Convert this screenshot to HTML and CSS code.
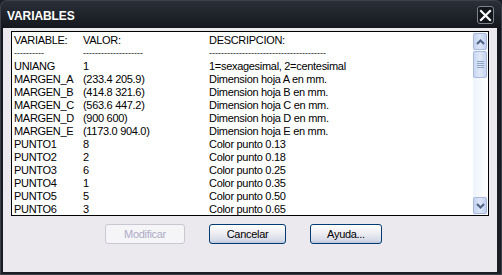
FILE: index.html
```html
<!DOCTYPE html>
<html lang="es">
<head>
  <meta charset="UTF-8" />
  <title>Variables</title>
  <link rel="stylesheet" href="styles.css">
</head>
<body>
  <div class="window">
    <div class="titlebar">
      <span class="title">VARIABLES</span>
      <button class="close" type="button">
        <svg width="13" height="13" viewBox="0 0 13 13"><path d="M2 2 L11 11 M11 2 L2 11" stroke="#fff" stroke-width="2.2" stroke-linecap="square"/></svg>
      </button>
    </div>

    <div class="client">
      <div class="listbox">
        <div class="rows">
          <div class="row"><span>VARIABLE:</span><span>VALOR:</span><span>DESCRIPCION:</span></div>
          <div class="row dashes"><span>----------</span><span>--------------------</span><span>---------------------------------------</span></div>
          <div class="row"><span>UNIANG</span><span>1</span><span>1=sexagesimal, 2=centesimal</span></div>
          <div class="row"><span>MARGEN_A</span><span>(233.4 205.9)</span><span>Dimension hoja A en mm.</span></div>
          <div class="row"><span>MARGEN_B</span><span>(414.8 321.6)</span><span>Dimension hoja B en mm.</span></div>
          <div class="row"><span>MARGEN_C</span><span>(563.6 447.2)</span><span>Dimension hoja C en mm.</span></div>
          <div class="row"><span>MARGEN_D</span><span>(900 600)</span><span>Dimension hoja D en mm.</span></div>
          <div class="row"><span>MARGEN_E</span><span>(1173.0 904.0)</span><span>Dimension hoja E en mm.</span></div>
          <div class="row"><span>PUNTO1</span><span>8</span><span>Color punto 0.13</span></div>
          <div class="row"><span>PUNTO2</span><span>2</span><span>Color punto 0.18</span></div>
          <div class="row"><span>PUNTO3</span><span>6</span><span>Color punto 0.25</span></div>
          <div class="row"><span>PUNTO4</span><span>1</span><span>Color punto 0.35</span></div>
          <div class="row"><span>PUNTO5</span><span>5</span><span>Color punto 0.50</span></div>
          <div class="row"><span>PUNTO6</span><span>3</span><span>Color punto 0.65</span></div>
        </div>

        <div class="scrollbar">
          <div class="sb-btn">
            <svg width="9" height="6" viewBox="0 0 9 6"><path d="M1 5 L4.5 1.5 L8 5" fill="none" stroke="#4d6185" stroke-width="2"/></svg>
          </div>
          <div class="sb-thumb">
            <svg width="7" height="7" viewBox="0 0 7 7"><path d="M0 0.5 H7 M0 2.5 H7 M0 4.5 H7 M0 6.5 H7" stroke="#8ea4c9" stroke-width="1"/></svg>
          </div>
          <div class="sb-track"></div>
          <div class="sb-btn">
            <svg width="9" height="6" viewBox="0 0 9 6"><path d="M1 1 L4.5 4.5 L8 1" fill="none" stroke="#4d6185" stroke-width="2"/></svg>
          </div>
        </div>
      </div>

      <div class="buttons">
        <button class="btn btn-modificar" type="button" disabled>Modificar</button>
        <button class="btn btn-cancelar" type="button">Cancelar</button>
        <button class="btn btn-ayuda" type="button">Ayuda...</button>
      </div>
    </div>
  </div>
</body>
</html>
```

FILE: styles.css
```css
body {
  margin: 0;
  background: #1b1e24;
  font-family: "Liberation Sans", Arial, sans-serif;
}

.window {
  width: 502px;
  height: 275px;
  display: flex;
  flex-direction: column;
  background: linear-gradient(#2c3039, #14171d 28px, #1b1e24);
  border-radius: 7px 7px 0 0;
  box-shadow: inset 0 0 0 1px #3b4049;
}

.titlebar {
  height: 28px;
  display: flex;
  align-items: center;
  justify-content: space-between;
  padding: 0 8px 0 7px;
}

.title {
  color: #fff;
  font-weight: bold;
  font-size: 12px;
  letter-spacing: -0.1px;
  margin-top: 3px;
}

.close {
  width: 17px;
  height: 18px;
  padding: 0;
  margin-top: 2px;
  display: flex;
  align-items: center;
  justify-content: center;
  background: #12151a;
  border: 1px solid #7d848e;
  border-radius: 3px;
}

.client {
  flex: 1;
  margin: 0 5px 3px 3px;
  padding: 3px 8px 0 8px;
  background: #ebe9ed;
}

.listbox {
  width: 476px;
  height: 183px;
  border: 1px solid #000;
  background: #fff;
  display: flex;
}

.rows {
  flex: 1;
  padding: 2px 0 0 2px;
  overflow: hidden;
}

.row {
  display: grid;
  grid-template-columns: 69px 126px 1fr;
  height: 13px;
  line-height: 13px;
  font-size: 11px;
  letter-spacing: -0.3px;
  color: #000;
  white-space: nowrap;
}

.row.dashes {
  font-size: 9px;
  letter-spacing: 0;
  line-height: 12px;
  color: #222;
}

.scrollbar {
  width: 15px;
  display: flex;
  flex-direction: column;
  background: linear-gradient(90deg, #eef3fc, #fdfeff);
  padding: 1px 0 1px 0;
}

.sb-btn {
  height: 15px;
  margin: 0 1px 0 0;
  display: flex;
  align-items: center;
  justify-content: center;
  background: linear-gradient(90deg, #c5d3ef, #dde6f7 50%, #c0cfee);
  border: 1px solid #a8b9dc;
  border-radius: 2px;
}

.sb-thumb {
  height: 25px;
  margin: 1px 1px 0 0;
  display: flex;
  align-items: center;
  justify-content: center;
  background: linear-gradient(90deg, #c9d7f1, #e0e8f8 50%, #c6d4f0);
  border: 1px solid #a8b9dc;
  border-radius: 2px;
}

.sb-track {
  flex: 1;
}

.buttons {
  display: flex;
  gap: 24px;
  padding: 8px 0 0 94px;
}

.btn {
  height: 20px;
  padding: 0;
  font-family: "Liberation Sans", Arial, sans-serif;
  font-size: 11px;
  letter-spacing: -0.3px;
  color: #000;
  border: 1px solid #003c74;
  border-radius: 3px;
  background: linear-gradient(#ffffff, #f0f0f4 40%, #d6dbe8 85%, #bcc5d9);
}

.btn-modificar {
  width: 80px;
  color: #aeacc6;
  border-color: #c9c7d2;
  background: #f5f4f6;
}

.btn-cancelar {
  width: 77px;
}

.btn-ayuda {
  width: 72px;
}
```
